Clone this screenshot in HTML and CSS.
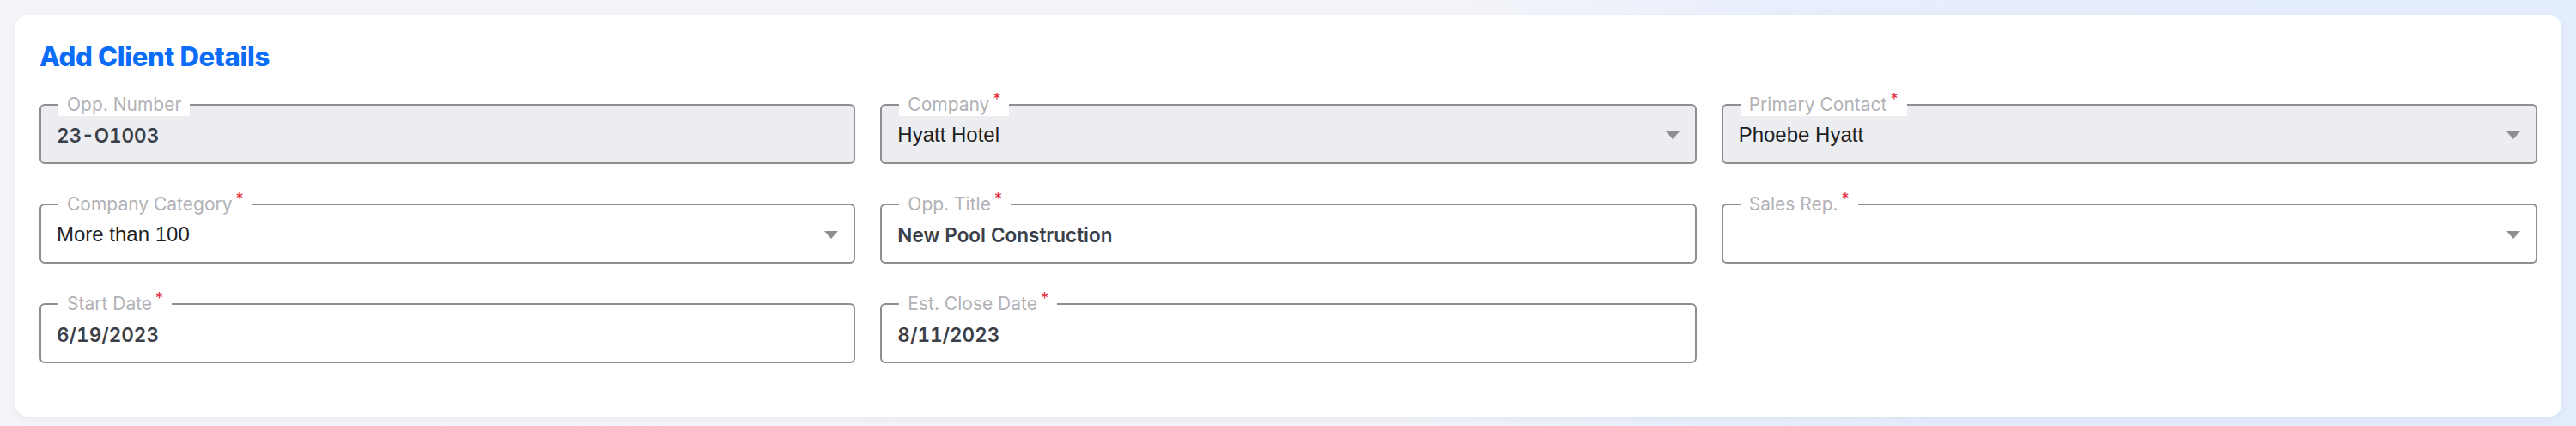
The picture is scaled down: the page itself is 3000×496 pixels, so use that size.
FILE: index.html
```html
<!DOCTYPE html>
<html lang="en">
<head>
    <meta charset="UTF-8">
    <title>Add Client Details</title>
    <link rel="stylesheet" href="styles.css">
</head>
<body>
    <div class="card">
        <!-- Header -->
        <h2 class="card-title">Add Client Details</h2>

        <!-- Form grid -->
        <div class="form-grid">
            <div class="field disabled">
                <span class="field-label">Opp. Number</span>
                <span class="field-value text">23-O1003</span>
            </div>
            <div class="field disabled">
                <span class="field-label">Company<sup>*</sup></span>
                <span class="field-value">Hyatt Hotel</span>
                <svg class="caret" width="16" height="9" viewBox="0 0 16 9"><polygon points="0,0 16,0 8,9"/></svg>
            </div>
            <div class="field disabled">
                <span class="field-label">Primary Contact<sup>*</sup></span>
                <span class="field-value">Phoebe Hyatt</span>
                <svg class="caret" width="16" height="9" viewBox="0 0 16 9"><polygon points="0,0 16,0 8,9"/></svg>
            </div>

            <div class="field">
                <span class="field-label">Company Category<sup>*</sup></span>
                <span class="field-value">More than 100</span>
                <svg class="caret" width="16" height="9" viewBox="0 0 16 9"><polygon points="0,0 16,0 8,9"/></svg>
            </div>
            <div class="field">
                <span class="field-label">Opp. Title<sup>*</sup></span>
                <span class="field-value text">New Pool Construction</span>
            </div>
            <div class="field">
                <span class="field-label">Sales Rep.<sup>*</sup></span>
                <span class="field-value"></span>
                <svg class="caret" width="16" height="9" viewBox="0 0 16 9"><polygon points="0,0 16,0 8,9"/></svg>
            </div>

            <div class="field">
                <span class="field-label">Start Date<sup>*</sup></span>
                <span class="field-value text">6/19/2023</span>
            </div>
            <div class="field">
                <span class="field-label">Est. Close Date<sup>*</sup></span>
                <span class="field-value text">8/11/2023</span>
            </div>
        </div>
    </div>
</body>
</html>
```

FILE: styles.css
```css
/* Page */
body {
    margin: 0;
    padding: 18px 17px 11px 18px;
    font-family: Inter, "Noto Sans", sans-serif;
    background: linear-gradient(100deg, #f4f5f9 0%, #f3f4f9 55%, #e7eefc 68%, #e3edfd 100%);
}

/* Card */
.card {
    background-color: #ffffff;
    border-radius: 14px;
    padding: 31px 28px 62px 28px;
    box-shadow: 0 3px 10px rgba(40, 50, 90, 0.06);
}

.card-title {
    margin: 0 0 38px 0;
    color: #0b6cf8;
    font-size: 31px;
    font-weight: 800;
    line-height: 34px;
    letter-spacing: -0.3px;
}

/* Fields */
.form-grid {
    display: grid;
    grid-template-columns: repeat(3, 1fr);
    column-gap: 29px;
    row-gap: 46px;
}

.field {
    position: relative;
    display: flex;
    align-items: center;
    justify-content: space-between;
    height: 70px;
    box-sizing: border-box;
    padding: 2px 18px 0 18px;
    border: 2px solid #8e8e93;
    border-radius: 6px;
    background-color: #ffffff;
}

.field.disabled {
    background-color: #ecedf1;
}

.field-label {
    position: absolute;
    top: -14px;
    left: 20px;
    padding: 0 10px;
    background-color: #ffffff;
    color: #b2b2b7;
    font-size: 21px;
    line-height: 26px;
}

.field-label sup {
    color: #e3283d;
    font-size: 18px;
    line-height: 0;
    margin-left: 4px;
    vertical-align: 7px;
}

.field-value {
    color: #1f1f1f;
    font-family: "Liberation Sans", Arial, sans-serif;
    font-size: 24px;
}

.field-value.text {
    color: #3b4048;
    font-family: Inter, "Noto Sans", sans-serif;
    font-size: 22.5px;
    font-weight: 600;
    font-variant-numeric: tabular-nums;
}

.caret {
    fill: #8e8e93;
}
```
